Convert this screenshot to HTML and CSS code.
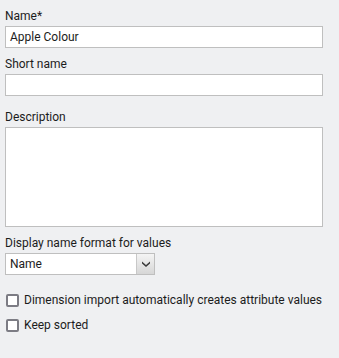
FILE: index.html
```html
<!DOCTYPE html>
<html>
<head>
    <title>Attribute properties</title>
    <link rel="stylesheet" href="styles.css">
</head>
<body>
    <div class="form">
        <div class="field">
            <label class="field-label">Name*</label>
            <div class="text-input">Apple Colour</div>
        </div>
        <div class="field">
            <label class="field-label">Short name</label>
            <div class="text-input"></div>
        </div>
        <div class="field field-desc">
            <label class="field-label">Description</label>
            <div class="text-area"></div>
        </div>
        <div class="field">
            <label class="field-label">Display name format for values</label>
            <div class="select">
                <span class="select-value">Name</span>
                <span class="select-button">
                    <svg width="10" height="6" viewBox="0 0 10 6">
                        <path d="M1 0.5 L5 4 L9 0.5 L9 2.5 L5 6 L1 2.5 Z" fill="#3a3a3a"/>
                    </svg>
                </span>
            </div>
        </div>
        <div class="checks">
            <div class="check-row">
                <span class="checkbox"></span>
                <span>Dimension import automatically creates attribute values</span>
            </div>
            <div class="check-row">
                <span class="checkbox"></span>
                <span>Keep sorted</span>
            </div>
        </div>
    </div>
</body>
</html>
```

FILE: styles.css
```css
* {
    margin: 0;
    padding: 0;
    box-sizing: border-box;
}

body {
    background: #eff0f2;
    font-family: Roboto, 'Liberation Sans', sans-serif;
    font-size: 12px;
    color: #1c1c1c;
}

.form {
    padding: 8px 16px 0 5px;
}

.field {
    display: flex;
    flex-direction: column;
    margin-bottom: 8px;
}

.field-desc {
    margin-top: 13px;
}

.field-label {
    line-height: 16px;
    margin-bottom: 2px;
}

.text-input {
    height: 22px;
    background: #fff;
    border: 1px solid #bfbfbf;
    line-height: 20px;
    padding-left: 4px;
}

.text-area {
    height: 100px;
    background: #fff;
    border: 1px solid #bfbfbf;
}

.select {
    display: flex;
    width: 150px;
    height: 22px;
    background: #fff;
    border: 1px solid #bfbfbf;
}

.select-value {
    flex: 1;
    line-height: 20px;
    padding-left: 4px;
}

.select-button {
    width: 18px;
    display: flex;
    align-items: center;
    justify-content: center;
    border-left: 1px solid #c8c8c8;
    background: linear-gradient(#f4f4f4, #d6d6d6);
}

.checks {
    display: flex;
    flex-direction: column;
    gap: 11px;
    margin-top: 18px;
    padding-left: 1px;
}

.check-row {
    display: flex;
    align-items: center;
    gap: 5px;
    height: 14px;
}

.checkbox {
    width: 13px;
    height: 13px;
    border: 2px solid #7c7c84;
    border-radius: 2px;
    background: #fff;
}
```
